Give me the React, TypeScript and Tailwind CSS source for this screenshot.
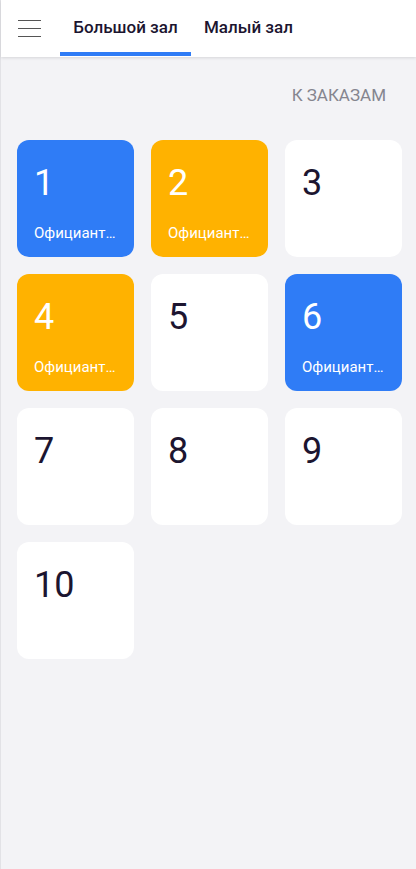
import React from "react";

type T = { n: number; c: "blue" | "orange" | "white" };

const tables: T[] = [
  { n: 1, c: "blue" },
  { n: 2, c: "orange" },
  { n: 3, c: "white" },
  { n: 4, c: "orange" },
  { n: 5, c: "white" },
  { n: 6, c: "blue" },
  { n: 7, c: "white" },
  { n: 8, c: "white" },
  { n: 9, c: "white" },
  { n: 10, c: "white" },
];

function Card({ t }: { t: T }) {
  const bg =
    t.c === "blue" ? "bg-[#2f7cf6] text-white" : t.c === "orange" ? "bg-[#ffb200] text-white" : "bg-white text-[#1c1530]";
  return (
    <div className={`h-[117px] w-[117px] rounded-[12px] ${bg} flex flex-col px-[17px]`}>
      <div className="mt-[23px] text-[36px] leading-[40px]">{t.n}</div>
      {t.c !== "white" && (
        <div className="mt-[21px] text-[15px] leading-[18px] truncate">Официант…</div>
      )}
    </div>
  );
}

export default function App() {
  return (
    <div
      className="min-h-[869px] w-[416px] bg-[#f3f3f6] border-l border-[#e2e2e6] flex flex-col"
      style={{ fontFamily: "Roboto, 'Noto Sans', sans-serif" }}
    >
      <div className="h-[57px] bg-white shadow-[0_1px_3px_rgba(0,0,0,0.12)] flex items-stretch relative z-10">
        <div className="w-[59px] flex flex-col justify-center pl-[17px] gap-[6.5px]">
          <div className="h-[1.5px] w-[23px] bg-[#555]" />
          <div className="h-[1.5px] w-[23px] bg-[#555]" />
          <div className="h-[1.5px] w-[23px] bg-[#555]" />
        </div>
        <div className="relative w-[131px] flex items-center justify-center text-[17px] font-medium text-[#1c1530] pb-[2px]">
          Большой зал
          <div className="absolute left-0 right-0 bottom-[1px] h-[4px] bg-[#2f7cf6]" />
        </div>
        <div className="flex items-center pl-[13px] text-[17px] font-medium text-[#1c1530] pb-[2px]">Малый зал</div>
      </div>
      <div className="flex justify-end pr-[30px] pt-[26px] h-[83px]">
        <span className="text-[17px] leading-[24px] text-[#85858f]">К ЗАКАЗАМ</span>
      </div>
      <div className="grid grid-cols-[117px_117px_117px] gap-[17px] pl-[16px]">
        {tables.map((t) => (
          <Card key={t.n} t={t} />
        ))}
      </div>
    </div>
  );
}
